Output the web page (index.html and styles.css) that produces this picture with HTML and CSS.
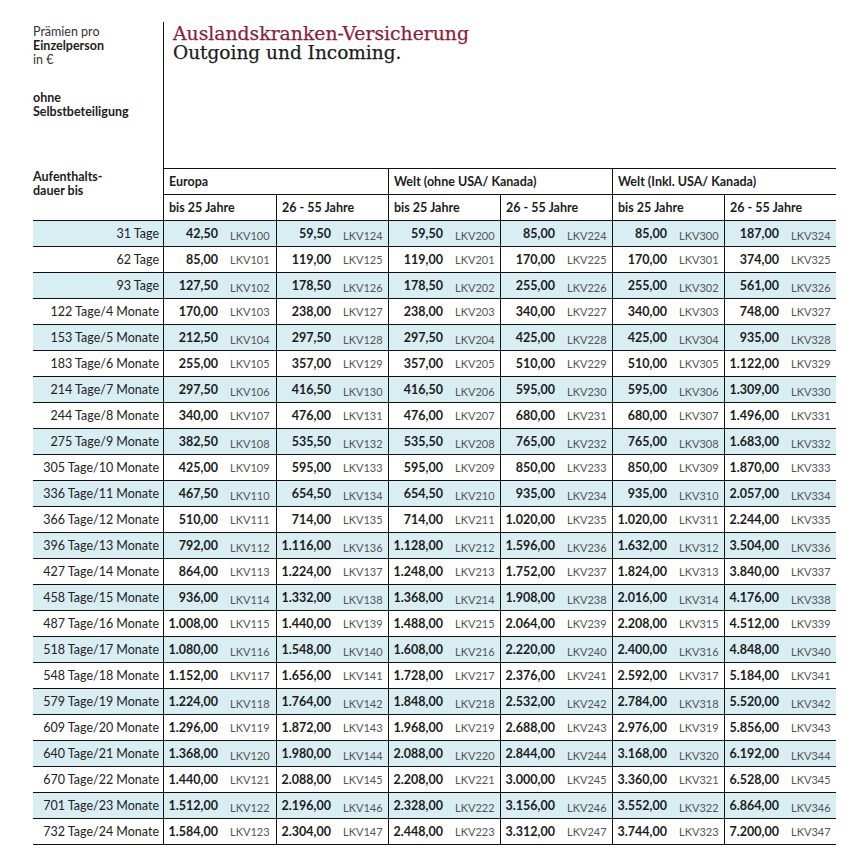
FILE: index.html
```html
<!DOCTYPE html>
<html lang="de">
<head>
<meta charset="utf-8">
<title>Auslandskranken-Versicherung</title>
<link rel="stylesheet" href="styles.css">
</head>
<body>
<div class="page">
  <div class="top">
    <div class="intro">
      <p>Prämien pro<br><b>Einzelperson</b><br>in €</p>
      <p class="ohne">ohne<br>Selbstbeteiligung</p>
    </div>
    <div class="titlebox">
      <h1>Auslandskranken-Versicherung</h1>
      <h2>Outgoing und Incoming.</h2>
    </div>
  </div>
  <div class="thead">
    <div class="corner">Aufenthalts-<br>dauer bis</div>
    <div class="region">Europa</div>
    <div class="region">Welt (ohne USA/ Kanada)</div>
    <div class="region">Welt (Inkl. USA/ Kanada)</div>
    <div class="age">bis 25 Jahre</div>
    <div class="age">26 - 55 Jahre</div>
    <div class="age">bis 25 Jahre</div>
    <div class="age">26 - 55 Jahre</div>
    <div class="age">bis 25 Jahre</div>
    <div class="age">26 - 55 Jahre</div>
  </div>
  <div class="tbody">
    <div class="row hl"><div class="lbl">31 Tage</div><div class="cell"><b>42,50</b><span>LKV100</span></div><div class="cell"><b>59,50</b><span>LKV124</span></div><div class="cell"><b>59,50</b><span>LKV200</span></div><div class="cell"><b>85,00</b><span>LKV224</span></div><div class="cell"><b>85,00</b><span>LKV300</span></div><div class="cell"><b>187,00</b><span>LKV324</span></div></div>
    <div class="row"><div class="lbl">62 Tage</div><div class="cell"><b>85,00</b><span>LKV101</span></div><div class="cell"><b>119,00</b><span>LKV125</span></div><div class="cell"><b>119,00</b><span>LKV201</span></div><div class="cell"><b>170,00</b><span>LKV225</span></div><div class="cell"><b>170,00</b><span>LKV301</span></div><div class="cell"><b>374,00</b><span>LKV325</span></div></div>
    <div class="row hl"><div class="lbl">93 Tage</div><div class="cell"><b>127,50</b><span>LKV102</span></div><div class="cell"><b>178,50</b><span>LKV126</span></div><div class="cell"><b>178,50</b><span>LKV202</span></div><div class="cell"><b>255,00</b><span>LKV226</span></div><div class="cell"><b>255,00</b><span>LKV302</span></div><div class="cell"><b>561,00</b><span>LKV326</span></div></div>
    <div class="row"><div class="lbl">122 Tage/4 Monate</div><div class="cell"><b>170,00</b><span>LKV103</span></div><div class="cell"><b>238,00</b><span>LKV127</span></div><div class="cell"><b>238,00</b><span>LKV203</span></div><div class="cell"><b>340,00</b><span>LKV227</span></div><div class="cell"><b>340,00</b><span>LKV303</span></div><div class="cell"><b>748,00</b><span>LKV327</span></div></div>
    <div class="row hl"><div class="lbl">153 Tage/5 Monate</div><div class="cell"><b>212,50</b><span>LKV104</span></div><div class="cell"><b>297,50</b><span>LKV128</span></div><div class="cell"><b>297,50</b><span>LKV204</span></div><div class="cell"><b>425,00</b><span>LKV228</span></div><div class="cell"><b>425,00</b><span>LKV304</span></div><div class="cell"><b>935,00</b><span>LKV328</span></div></div>
    <div class="row"><div class="lbl">183 Tage/6 Monate</div><div class="cell"><b>255,00</b><span>LKV105</span></div><div class="cell"><b>357,00</b><span>LKV129</span></div><div class="cell"><b>357,00</b><span>LKV205</span></div><div class="cell"><b>510,00</b><span>LKV229</span></div><div class="cell"><b>510,00</b><span>LKV305</span></div><div class="cell"><b>1.122,00</b><span>LKV329</span></div></div>
    <div class="row hl"><div class="lbl">214 Tage/7 Monate</div><div class="cell"><b>297,50</b><span>LKV106</span></div><div class="cell"><b>416,50</b><span>LKV130</span></div><div class="cell"><b>416,50</b><span>LKV206</span></div><div class="cell"><b>595,00</b><span>LKV230</span></div><div class="cell"><b>595,00</b><span>LKV306</span></div><div class="cell"><b>1.309,00</b><span>LKV330</span></div></div>
    <div class="row"><div class="lbl">244 Tage/8 Monate</div><div class="cell"><b>340,00</b><span>LKV107</span></div><div class="cell"><b>476,00</b><span>LKV131</span></div><div class="cell"><b>476,00</b><span>LKV207</span></div><div class="cell"><b>680,00</b><span>LKV231</span></div><div class="cell"><b>680,00</b><span>LKV307</span></div><div class="cell"><b>1.496,00</b><span>LKV331</span></div></div>
    <div class="row hl"><div class="lbl">275 Tage/9 Monate</div><div class="cell"><b>382,50</b><span>LKV108</span></div><div class="cell"><b>535,50</b><span>LKV132</span></div><div class="cell"><b>535,50</b><span>LKV208</span></div><div class="cell"><b>765,00</b><span>LKV232</span></div><div class="cell"><b>765,00</b><span>LKV308</span></div><div class="cell"><b>1.683,00</b><span>LKV332</span></div></div>
    <div class="row"><div class="lbl">305 Tage/10 Monate</div><div class="cell"><b>425,00</b><span>LKV109</span></div><div class="cell"><b>595,00</b><span>LKV133</span></div><div class="cell"><b>595,00</b><span>LKV209</span></div><div class="cell"><b>850,00</b><span>LKV233</span></div><div class="cell"><b>850,00</b><span>LKV309</span></div><div class="cell"><b>1.870,00</b><span>LKV333</span></div></div>
    <div class="row hl"><div class="lbl">336 Tage/11 Monate</div><div class="cell"><b>467,50</b><span>LKV110</span></div><div class="cell"><b>654,50</b><span>LKV134</span></div><div class="cell"><b>654,50</b><span>LKV210</span></div><div class="cell"><b>935,00</b><span>LKV234</span></div><div class="cell"><b>935,00</b><span>LKV310</span></div><div class="cell"><b>2.057,00</b><span>LKV334</span></div></div>
    <div class="row"><div class="lbl">366 Tage/12 Monate</div><div class="cell"><b>510,00</b><span>LKV111</span></div><div class="cell"><b>714,00</b><span>LKV135</span></div><div class="cell"><b>714,00</b><span>LKV211</span></div><div class="cell"><b>1.020,00</b><span>LKV235</span></div><div class="cell"><b>1.020,00</b><span>LKV311</span></div><div class="cell"><b>2.244,00</b><span>LKV335</span></div></div>
    <div class="row hl"><div class="lbl">396 Tage/13 Monate</div><div class="cell"><b>792,00</b><span>LKV112</span></div><div class="cell"><b>1.116,00</b><span>LKV136</span></div><div class="cell"><b>1.128,00</b><span>LKV212</span></div><div class="cell"><b>1.596,00</b><span>LKV236</span></div><div class="cell"><b>1.632,00</b><span>LKV312</span></div><div class="cell"><b>3.504,00</b><span>LKV336</span></div></div>
    <div class="row"><div class="lbl">427 Tage/14 Monate</div><div class="cell"><b>864,00</b><span>LKV113</span></div><div class="cell"><b>1.224,00</b><span>LKV137</span></div><div class="cell"><b>1.248,00</b><span>LKV213</span></div><div class="cell"><b>1.752,00</b><span>LKV237</span></div><div class="cell"><b>1.824,00</b><span>LKV313</span></div><div class="cell"><b>3.840,00</b><span>LKV337</span></div></div>
    <div class="row hl"><div class="lbl">458 Tage/15 Monate</div><div class="cell"><b>936,00</b><span>LKV114</span></div><div class="cell"><b>1.332,00</b><span>LKV138</span></div><div class="cell"><b>1.368,00</b><span>LKV214</span></div><div class="cell"><b>1.908,00</b><span>LKV238</span></div><div class="cell"><b>2.016,00</b><span>LKV314</span></div><div class="cell"><b>4.176,00</b><span>LKV338</span></div></div>
    <div class="row"><div class="lbl">487 Tage/16 Monate</div><div class="cell"><b>1.008,00</b><span>LKV115</span></div><div class="cell"><b>1.440,00</b><span>LKV139</span></div><div class="cell"><b>1.488,00</b><span>LKV215</span></div><div class="cell"><b>2.064,00</b><span>LKV239</span></div><div class="cell"><b>2.208,00</b><span>LKV315</span></div><div class="cell"><b>4.512,00</b><span>LKV339</span></div></div>
    <div class="row hl"><div class="lbl">518 Tage/17 Monate</div><div class="cell"><b>1.080,00</b><span>LKV116</span></div><div class="cell"><b>1.548,00</b><span>LKV140</span></div><div class="cell"><b>1.608,00</b><span>LKV216</span></div><div class="cell"><b>2.220,00</b><span>LKV240</span></div><div class="cell"><b>2.400,00</b><span>LKV316</span></div><div class="cell"><b>4.848,00</b><span>LKV340</span></div></div>
    <div class="row"><div class="lbl">548 Tage/18 Monate</div><div class="cell"><b>1.152,00</b><span>LKV117</span></div><div class="cell"><b>1.656,00</b><span>LKV141</span></div><div class="cell"><b>1.728,00</b><span>LKV217</span></div><div class="cell"><b>2.376,00</b><span>LKV241</span></div><div class="cell"><b>2.592,00</b><span>LKV317</span></div><div class="cell"><b>5.184,00</b><span>LKV341</span></div></div>
    <div class="row hl"><div class="lbl">579 Tage/19 Monate</div><div class="cell"><b>1.224,00</b><span>LKV118</span></div><div class="cell"><b>1.764,00</b><span>LKV142</span></div><div class="cell"><b>1.848,00</b><span>LKV218</span></div><div class="cell"><b>2.532,00</b><span>LKV242</span></div><div class="cell"><b>2.784,00</b><span>LKV318</span></div><div class="cell"><b>5.520,00</b><span>LKV342</span></div></div>
    <div class="row"><div class="lbl">609 Tage/20 Monate</div><div class="cell"><b>1.296,00</b><span>LKV119</span></div><div class="cell"><b>1.872,00</b><span>LKV143</span></div><div class="cell"><b>1.968,00</b><span>LKV219</span></div><div class="cell"><b>2.688,00</b><span>LKV243</span></div><div class="cell"><b>2.976,00</b><span>LKV319</span></div><div class="cell"><b>5.856,00</b><span>LKV343</span></div></div>
    <div class="row hl"><div class="lbl">640 Tage/21 Monate</div><div class="cell"><b>1.368,00</b><span>LKV120</span></div><div class="cell"><b>1.980,00</b><span>LKV144</span></div><div class="cell"><b>2.088,00</b><span>LKV220</span></div><div class="cell"><b>2.844,00</b><span>LKV244</span></div><div class="cell"><b>3.168,00</b><span>LKV320</span></div><div class="cell"><b>6.192,00</b><span>LKV344</span></div></div>
    <div class="row"><div class="lbl">670 Tage/22 Monate</div><div class="cell"><b>1.440,00</b><span>LKV121</span></div><div class="cell"><b>2.088,00</b><span>LKV145</span></div><div class="cell"><b>2.208,00</b><span>LKV221</span></div><div class="cell"><b>3.000,00</b><span>LKV245</span></div><div class="cell"><b>3.360,00</b><span>LKV321</span></div><div class="cell"><b>6.528,00</b><span>LKV345</span></div></div>
    <div class="row hl"><div class="lbl">701 Tage/23 Monate</div><div class="cell"><b>1.512,00</b><span>LKV122</span></div><div class="cell"><b>2.196,00</b><span>LKV146</span></div><div class="cell"><b>2.328,00</b><span>LKV222</span></div><div class="cell"><b>3.156,00</b><span>LKV246</span></div><div class="cell"><b>3.552,00</b><span>LKV322</span></div><div class="cell"><b>6.864,00</b><span>LKV346</span></div></div>
    <div class="row"><div class="lbl">732 Tage/24 Monate</div><div class="cell"><b>1.584,00</b><span>LKV123</span></div><div class="cell"><b>2.304,00</b><span>LKV147</span></div><div class="cell"><b>2.448,00</b><span>LKV223</span></div><div class="cell"><b>3.312,00</b><span>LKV247</span></div><div class="cell"><b>3.744,00</b><span>LKV323</span></div><div class="cell"><b>7.200,00</b><span>LKV347</span></div></div>
  </div>
</div>
</body>
</html>
```
FILE: styles.css
```css
* { box-sizing: border-box; }
html, body { margin: 0; padding: 0; background: #ffffff; }
body {
  font-family: Lato, "Open Sans", sans-serif;
  color: #1c1c1c;
  font-size: 12.5px;
}
.page {
  margin-left: 33px;
  padding-top: 22px;
  width: 803px;
}
.top {
  display: flex;
  height: 146px;
}
.intro {
  width: 130px;
  padding-top: 3px;
  font-size: 12.5px;
  line-height: 13.8px;
  color: #333333;
}
.intro p { margin: 0; }
.intro b { color: #1c1c1c; }
.intro .ohne {
  margin-top: 25px;
  font-weight: 700;
  color: #1c1c1c;
}
.titlebox {
  flex: 1;
  border-left: 1px solid #111111;
  padding-left: 9px;
  padding-top: 2px;
}
.titlebox h1,
.titlebox h2 {
  margin: 0;
  font-family: "DejaVu Serif", "Liberation Serif", serif;
  font-weight: 400;
  font-size: 18.5px;
  line-height: 19px;
  -webkit-text-stroke: 0.25px currentColor;
}
.titlebox h1 { color: #8a1c3e; font-size: 18.8px; }
.titlebox h2 { color: #1c1c1c; }

.thead,
.row {
  display: grid;
  grid-template-columns: 130px 113px 112px 112px 112px 112px 112px;
}
.thead {
  grid-template-rows: 27px 26px;
  font-weight: 700;
}
.corner {
  grid-row: 1 / span 2;
  border-bottom: 1px solid #111111;
  line-height: 13.5px;
  padding-top: 2px;
}
.region {
  grid-column: span 2;
  border-top: 1px solid #111111;
  border-left: 1px solid #111111;
  border-bottom: 1px solid #111111;
  padding-left: 5px;
  display: flex;
  align-items: center;
}
.age {
  border-left: 1px solid #111111;
  border-bottom: 1px solid #111111;
  padding-left: 5px;
  display: flex;
  align-items: center;
}
.row {
  height: 26px;
  border-bottom: 1px solid #111111;
}
.row.hl { background: #d8eef2; }
.lbl {
  text-align: right;
  padding-right: 4px;
  display: flex;
  align-items: center;
  justify-content: flex-end;
  white-space: nowrap;
  color: #222222;
}
.cell {
  border-left: 1px solid #111111;
  display: flex;
  align-items: center;
  white-space: nowrap;
}
.cell b {
  width: 54px;
  text-align: right;
  font-weight: 700;
}
.cell span {
  margin-left: 12px;
  font-size: 11px;
  color: #555555;
}
.hl .cell span { margin-top: 4px; }
```
